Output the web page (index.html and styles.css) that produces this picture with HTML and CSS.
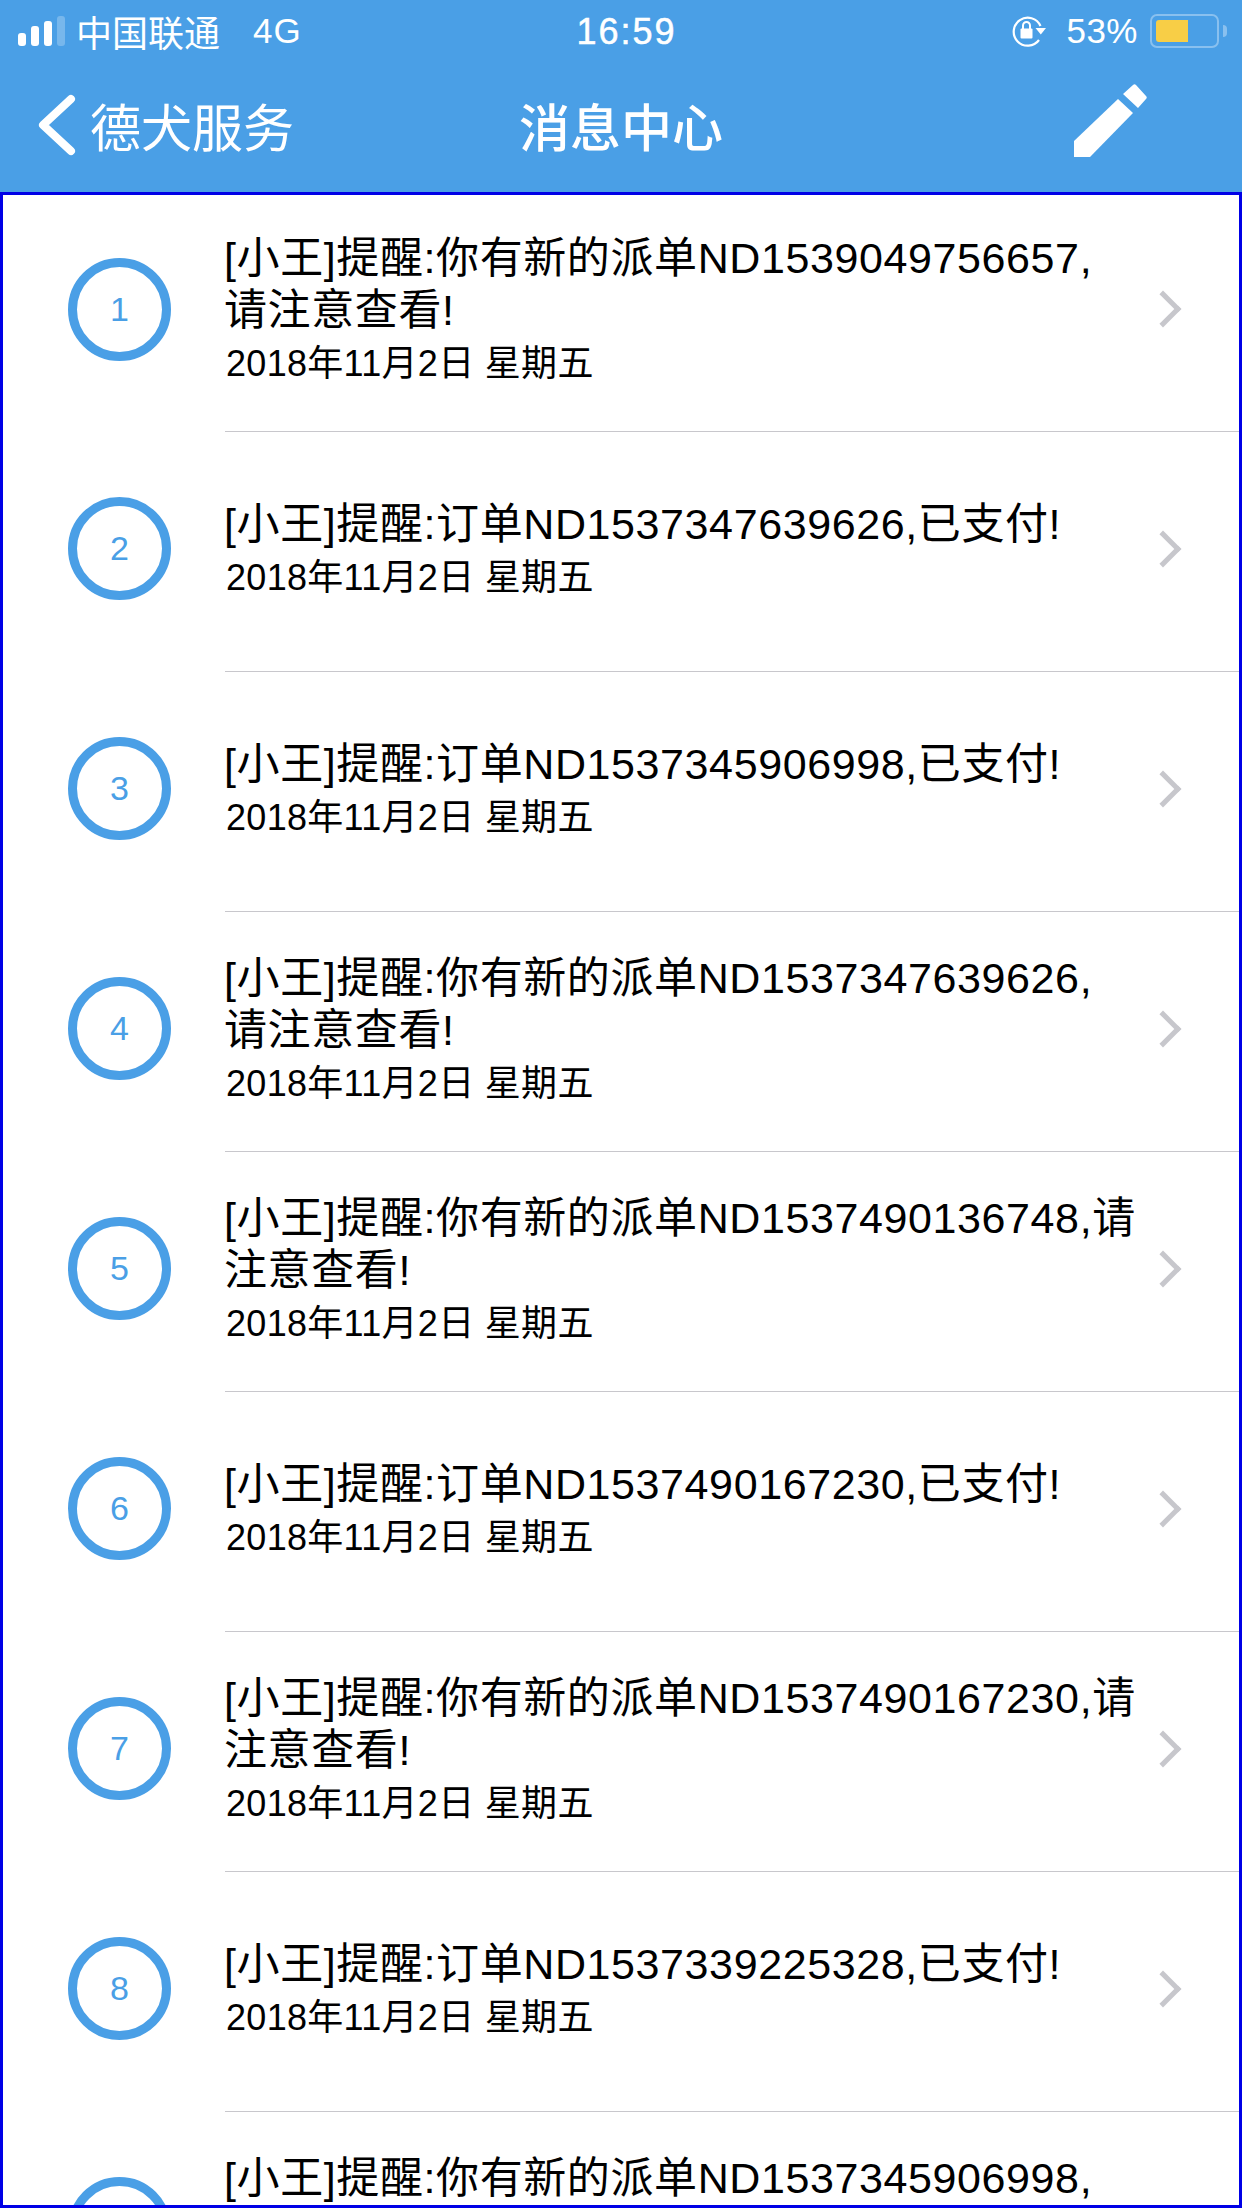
FILE: index.html
```html
<!DOCTYPE html>
<html lang="zh-CN">
<head>
<meta charset="UTF-8">
<meta name="viewport" content="width=device-width, initial-scale=1.0">
<title>消息中心</title>
<link rel="stylesheet" href="styles.css">
</head>

<body>
<header class="top-bar">
  <div class="status-bar">
    <div class="status-left">
      <span class="signal">
        <i class="bar bar-1"></i><i class="bar bar-2"></i><i class="bar bar-3"></i><i class="bar bar-4"></i>
      </span>
      <span class="carrier">中国联通</span>
      <span class="network">4G</span>
    </div>
    <div class="status-time">16:59</div>
    <div class="status-right">
      <svg class="lock-icon" viewBox="0 0 34 32" width="34" height="32">
        <path d="M27 25A14 14 0 1 1 28.500 11" fill="none" stroke="#fff" stroke-width="2.2"/>
        <path d="M23.500 13h10.500l-5.200 6.500z" fill="#fff"/>
        <rect x="8.500" y="13.500" width="12" height="10" rx="1" fill="#fff"/>
        <path d="M11 14V10.500a3.500 3.500 0 0 1 7 0V14" fill="none" stroke="#fff" stroke-width="2"/>
      </svg>
      <span class="battery-pct">53%</span>
      <span class="battery"><span class="battery-fill"></span></span>
      <span class="battery-nub"></span>
    </div>
  </div>

  <nav class="nav-bar">
    <a class="nav-back">
      <svg viewBox="0 0 38 62" width="38" height="62">
        <path d="M33 5L5 31l28 26" fill="none" stroke="#fff" stroke-width="8" stroke-linecap="round" stroke-linejoin="round"/>
      </svg>
      <span>德犬服务</span>
    </a>
    <div class="nav-title">消息中心</div>
    <a class="nav-edit">
      <svg viewBox="0 0 73 73" width="73" height="73">
        <path d="M0 57L44 15 59 29 16 73H0z" fill="#fff"/>
        <path d="M49 10L59 1c1-1 2-1 3 0l10 11c1 1 1 2 0 3L64 24z" fill="#fff"/>
      </svg>
    </a>
  </nav>
</header>

<main class="msg-list">
  <div class="msg-row">
    <div class="msg-num">1</div>
    <div class="msg-body">
      <div class="msg-title">[小王]提醒:你有新的派单ND1539049756657,<br>请注意查看!</div>
      <div class="msg-date">2018年11月2日 星期五</div>
    </div>
    <span class="msg-arrow"></span>
  </div>
  <div class="msg-row">
    <div class="msg-num">2</div>
    <div class="msg-body">
      <div class="msg-title">[小王]提醒:订单ND1537347639626,已支付!</div>
      <div class="msg-date">2018年11月2日 星期五</div>
    </div>
    <span class="msg-arrow"></span>
  </div>
  <div class="msg-row">
    <div class="msg-num">3</div>
    <div class="msg-body">
      <div class="msg-title">[小王]提醒:订单ND1537345906998,已支付!</div>
      <div class="msg-date">2018年11月2日 星期五</div>
    </div>
    <span class="msg-arrow"></span>
  </div>
  <div class="msg-row">
    <div class="msg-num">4</div>
    <div class="msg-body">
      <div class="msg-title">[小王]提醒:你有新的派单ND1537347639626,<br>请注意查看!</div>
      <div class="msg-date">2018年11月2日 星期五</div>
    </div>
    <span class="msg-arrow"></span>
  </div>
  <div class="msg-row">
    <div class="msg-num">5</div>
    <div class="msg-body">
      <div class="msg-title">[小王]提醒:你有新的派单ND1537490136748,请<br>注意查看!</div>
      <div class="msg-date">2018年11月2日 星期五</div>
    </div>
    <span class="msg-arrow"></span>
  </div>
  <div class="msg-row">
    <div class="msg-num">6</div>
    <div class="msg-body">
      <div class="msg-title">[小王]提醒:订单ND1537490167230,已支付!</div>
      <div class="msg-date">2018年11月2日 星期五</div>
    </div>
    <span class="msg-arrow"></span>
  </div>
  <div class="msg-row">
    <div class="msg-num">7</div>
    <div class="msg-body">
      <div class="msg-title">[小王]提醒:你有新的派单ND1537490167230,请<br>注意查看!</div>
      <div class="msg-date">2018年11月2日 星期五</div>
    </div>
    <span class="msg-arrow"></span>
  </div>
  <div class="msg-row">
    <div class="msg-num">8</div>
    <div class="msg-body">
      <div class="msg-title">[小王]提醒:订单ND1537339225328,已支付!</div>
      <div class="msg-date">2018年11月2日 星期五</div>
    </div>
    <span class="msg-arrow"></span>
  </div>
  <div class="msg-row">
    <div class="msg-num">9</div>
    <div class="msg-body">
      <div class="msg-title">[小王]提醒:你有新的派单ND1537345906998,<br>请注意查看!</div>
      <div class="msg-date">2018年11月2日 星期五</div>
    </div>
    <span class="msg-arrow"></span>
  </div>
</main>
</body>
</html>
```

FILE: styles.css
```css
/* Message centre screen */
html, body {
  margin: 0;
  height: 100%;
  overflow: hidden;
}

body {
  display: flex;
  flex-direction: column;
  background: white;
  font-family: 'Liberation Sans', 'Noto Sans CJK SC', sans-serif;
  color: #000;
}

.top-bar {
  flex: none;
  height: 192px;
  background: #4a9fe6;
  color: white;
}

/* status bar */
.status-bar {
  height: 62px;
  padding: 0 15px 0 18px;
  display: grid;
  grid-template-columns: 1fr auto 1fr;
  align-items: center;
  font-size: 35px;
}

.status-left {
  display: flex;
  align-items: center;
}

.signal {
  display: flex;
  align-items: flex-end;
  gap: 5px;
  height: 30px;
  margin-right: 11px;
}

.bar {
  width: 8px;
  border-radius: 3px;
  background: white;
}

.bar-1 { height: 13px; }
.bar-2 { height: 20px; }
.bar-3 { height: 25px; }
.bar-4 { height: 30px; background: rgba(255,255,255,0.25); }

.carrier {
  font-size: 36px;
  margin-right: 33px;
}

.network {
  letter-spacing: 1px;
}

.status-time {
  margin: 2px 0 0 8px;
  font-size: 36px;
  letter-spacing: 2px;
  -webkit-text-stroke: 0.5px white;
}

.status-right {
  display: flex;
  align-items: center;
  justify-content: flex-end;
}

.lock-icon {
  margin-right: 20px;
}

.battery-pct {
  letter-spacing: 0.5px;
}

.battery {
  box-sizing: border-box;
  width: 69px;
  height: 34px;
  margin-left: 12px;
  padding: 4px;
  border: 2px solid rgba(255,255,255,0.35);
  border-radius: 7px;
}

.battery-fill {
  display: block;
  width: 32px;
  height: 100%;
  background: #f8ce46;
  border-radius: 3px 0 0 3px;
}

.battery-nub {
  width: 4px;
  height: 12px;
  margin-left: 4px;
  background: rgba(255,255,255,0.35);
  border-radius: 0 4px 4px 0;
}

/* nav bar */
.nav-bar {
  height: 126px;
  padding: 0 38px;
  display: grid;
  grid-template-columns: 1fr auto 1fr;
  align-items: center;
  font-size: 51px;
}

.nav-back {
  display: flex;
  align-items: center;
  gap: 14px;
}

.nav-back svg,
.nav-edit svg {
  display: block;
}

.nav-title {
  font-weight: 500;
}

.nav-edit {
  justify-self: end;
  margin: 0 57px 10px 0;
}

/* message list */
.msg-list {
  flex: 1;
  min-height: 0;
  overflow: hidden;
  border: 3px solid #0000e6;
}

.msg-row {
  position: relative;
  box-sizing: border-box;
  height: 240px;
  padding: 0 63px 7px 65px;
  display: flex;
  align-items: center;
}

.msg-row:first-child {
  height: 237px;
  padding-bottom: 9px;
}

/* separator starts under the text column */
.msg-row::after {
  content: "";
  position: absolute;
  left: 222px;
  right: 0;
  bottom: 0;
  height: 1px;
  background: #c8c7cc;
}

.msg-num {
  flex: none;
  box-sizing: border-box;
  width: 103px;
  height: 103px;
  margin-right: 54px;
  border: 9px solid #4a9fe6;
  border-radius: 50%;
  display: flex;
  align-items: center;
  justify-content: center;
  font-size: 34px;
  color: #4a9fe6;
}

.msg-body {
  flex: 1;
  min-width: 0;
  padding-top: 5px;
}

.msg-title {
  font-size: 43px;
  line-height: 52px;
  letter-spacing: 0.6px;
  margin-left: -1px;
}

.msg-date {
  font-size: 36px;
  line-height: 55px;
  letter-spacing: 0.3px;
  margin-left: 1px;
}

.msg-arrow {
  flex: none;
  box-sizing: border-box;
  width: 26px;
  height: 26px;
  border-top: 5px solid #c7c7cc;
  border-right: 5px solid #c7c7cc;
  transform: rotate(45deg);
}
```
